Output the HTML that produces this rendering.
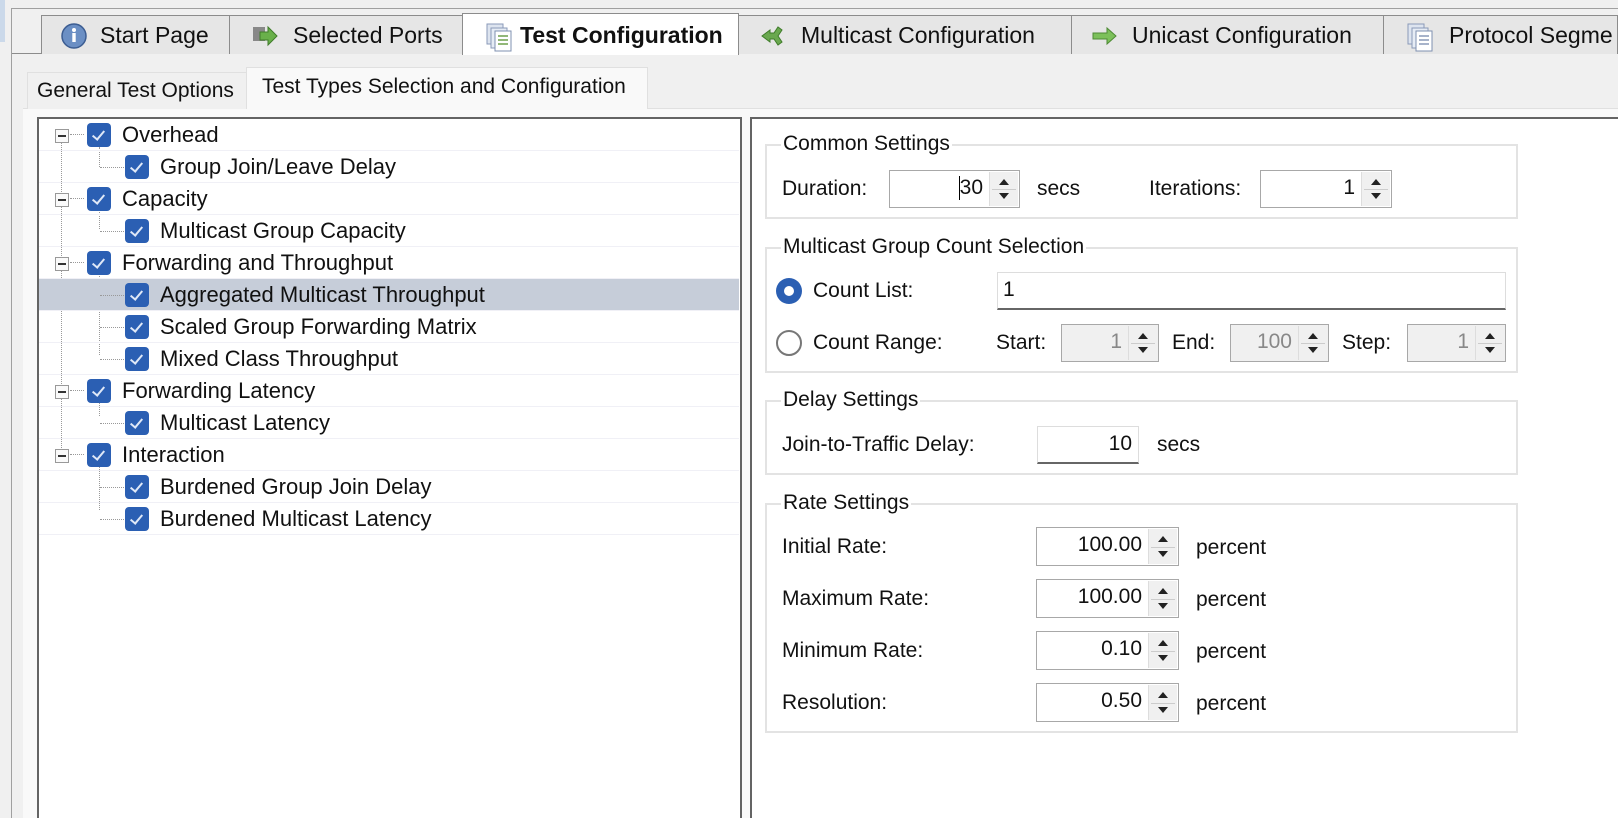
<!DOCTYPE html>
<html style="overflow:hidden;width:1618px;height:818px"><head><meta charset="utf-8"><style>
*{box-sizing:border-box;margin:0;padding:0}
body{width:1618px;height:818px;overflow:hidden;background:#f0f0f0;font-family:"Liberation Sans",sans-serif;color:#111;position:relative}
.a{position:absolute}
.tab{position:absolute;top:15px;height:39px;border:1px solid #8c8c8c;border-bottom:none;background:#e6e6e6;font-size:23px;line-height:36px;white-space:nowrap;overflow:hidden}
.tab svg{position:absolute;top:6px}
.tab span{position:absolute;top:1px}
.st{position:absolute;font-size:21px;line-height:36px;white-space:nowrap}
.row{position:absolute;left:39px;width:700px;height:32px;border-bottom:1px solid #f0f0f6;font-size:22px;line-height:31px}
.cb{position:absolute;width:24px;height:24px;border-radius:4px;background:#2b5fb3;top:4px}
.cb:after{content:"";position:absolute;left:8px;top:5px;width:5px;height:10px;border:solid #dfe8f7;border-width:0 2px 2px 0;transform:rotate(40deg)}
.row .t{position:absolute;top:0}
.exp{position:absolute;width:14px;height:14px;border:1px solid #999;background:#fafafa;top:10px}
.exp:after{content:"";position:absolute;left:2px;top:5px;width:8px;height:2px;background:#333}
.vl{position:absolute;border-left:1px dotted #999;width:0}
.hl{position:absolute;border-top:1px dotted #999;height:0}
.grp{position:absolute;border:2px solid #e3e3e3;left:765px;width:753px}
.gt{position:absolute;left:14px;top:-14px;background:#fff;padding:0 2px;font-size:21px;line-height:24px;white-space:nowrap}
.lbl{position:absolute;font-size:21px;line-height:24px;white-space:nowrap}
.inp{position:absolute;border:1px solid #a8a8a8;background:#fff;font-size:21px;line-height:34px;text-align:right}
.inp .v{position:absolute;right:36px;top:0}
.sp{position:absolute;right:1px;top:1px;bottom:1px;width:29px;background:#f0f0f0;border-left:1px solid #ddd}
.sp:before{content:"";position:absolute;left:9px;top:7px;border:5px solid transparent;border-bottom:6px solid #222;border-top:none}
.sp:after{content:"";position:absolute;left:9px;bottom:7px;border:5px solid transparent;border-top:6px solid #222;border-bottom:none}
.sp i{position:absolute;left:2px;right:2px;top:50%;border-top:1px solid #ccc}
.dis{background:#f0f0f0;color:#888}
</style></head><body>
<div class="a" style="left:0;top:0;width:5px;height:42px;background:#cbd9ea"></div>
<div class="a" style="left:11px;top:8px;width:1607px;height:810px;border-left:1px solid #a0a0a0;border-top:1px solid #a0a0a0"></div>
<div class="a" style="left:12px;top:53px;width:1606px;height:1px;background:#8c8c8c"></div>

<div class="tab" style="left:41px;width:189px"><svg style="left:18px" width="28" height="28" viewBox="0 0 28 28"><circle cx="14" cy="14" r="12" fill="#6b8fc4" stroke="#3c5d92" stroke-width="1.5"/><rect x="12.3" y="11" width="3.4" height="9" fill="#fff"/><circle cx="14" cy="8" r="2" fill="#fff"/></svg><span style="left:58px">Start Page</span></div>
<div class="tab" style="left:229px;width:234px"><svg style="left:20px" width="28" height="28" viewBox="0 0 28 28"><rect x="3" y="5" width="12" height="14" fill="#888"/><path d="M10 10h8V5l9 9-9 9v-5h-8z" fill="#69b04a" stroke="#3f7c2a"/></svg><span style="left:63px">Selected Ports</span></div>
<div class="tab" style="left:462px;width:277px;top:13px;height:42px;background:#fff;border-color:#8c8c8c"><svg style="left:22px;top:8px" width="28" height="30" viewBox="0 0 28 30"><rect x="2" y="2" width="16" height="20" fill="#dde4ef" stroke="#8a9ab8"/><rect x="6" y="6" width="16" height="20" fill="#e6ecf5" stroke="#8a9ab8"/><rect x="10" y="9" width="16" height="20" fill="#fff" stroke="#7f90b0"/><path d="M13 14h10M13 18h10M13 22h10" stroke="#6fa04c" stroke-width="1.5"/></svg><span style="left:57px;top:3px;font-weight:bold;font-size:23px">Test Configuration</span></div>
<div class="tab" style="left:738px;width:334px"><svg style="left:20px" width="28" height="28" viewBox="0 0 28 28"><path d="M3 14l8-6v3h4l4-6 4 3-4 6 4 6-4 3-4-6h-4v3z" fill="#6aa84f" stroke="#3f7c2a"/></svg><span style="left:62px">Multicast Configuration</span></div>
<div class="tab" style="left:1071px;width:313px"><svg style="left:18px" width="30" height="28" viewBox="0 0 30 28"><path d="M3 11h14V6l9 8-9 8v-5H3z" fill="#7cc05a" stroke="#4d8a34"/></svg><span style="left:60px">Unicast Configuration</span></div>
<div class="tab" style="left:1383px;width:235px"><svg style="left:22px" width="28" height="30" viewBox="0 0 28 30"><rect x="2" y="2" width="16" height="20" fill="#dde4ef" stroke="#8a9ab8"/><rect x="6" y="6" width="16" height="20" fill="#e6ecf5" stroke="#8a9ab8"/><rect x="10" y="9" width="16" height="20" fill="#fff" stroke="#7f90b0"/><path d="M13 14h10M13 18h10M13 22h10" stroke="#8a9ab8" stroke-width="1.5"/></svg><span style="left:65px">Protocol Segme</span></div>

<div class="a" style="left:23px;top:108px;width:1595px;height:710px;background:#f9f9f9;border-top:1px solid #e0e0e0"></div>
<div class="st" style="left:27px;top:72px;width:220px;height:37px;background:#f0f0f0;border:1px solid #e0e0e0;border-bottom:none;padding-left:9px">General Test Options</div>
<div class="st" style="left:246px;top:67px;width:402px;height:42px;background:#f9f9f9;border:1px solid #e0e0e0;border-bottom:none;padding-left:15px;line-height:38px">Test Types Selection and Configuration</div>

<div class="a" style="left:37px;top:117px;width:705px;height:701px;background:#fff;border:2px solid #646464;border-bottom:none"></div>
<div class="a" style="left:750px;top:117px;width:868px;height:701px;background:#fff;border:2px solid #646464;border-bottom:none;border-right:none"></div>

<div class="vl" style="left:61px;top:142px;height:316px"></div>
<div class="vl" style="left:99px;top:147px;height:20px"></div>
<div class="vl" style="left:99px;top:209px;height:20px"></div>
<div class="vl" style="left:99px;top:271px;height:84px"></div>
<div class="vl" style="left:99px;top:396px;height:20px"></div>
<div class="vl" style="left:99px;top:458px;height:52px"></div>

<div class="row" style="top:119px"><div class="exp" style="left:16px"></div><div class="hl" style="left:31px;top:15px;width:14px"></div><div class="cb" style="left:48px"></div><span class="t" style="left:83px">Overhead</span></div>
<div class="row" style="top:151px"><div class="hl" style="left:61px;top:16px;width:24px"></div><div class="cb" style="left:86px"></div><span class="t" style="left:121px">Group Join/Leave Delay</span></div>
<div class="row" style="top:183px"><div class="exp" style="left:16px"></div><div class="hl" style="left:31px;top:15px;width:14px"></div><div class="cb" style="left:48px"></div><span class="t" style="left:83px">Capacity</span></div>
<div class="row" style="top:215px"><div class="hl" style="left:61px;top:16px;width:24px"></div><div class="cb" style="left:86px"></div><span class="t" style="left:121px">Multicast Group Capacity</span></div>
<div class="row" style="top:247px"><div class="exp" style="left:16px"></div><div class="hl" style="left:31px;top:15px;width:14px"></div><div class="cb" style="left:48px"></div><span class="t" style="left:83px">Forwarding and Throughput</span></div>
<div class="row" style="top:279px;background:#c6cdd9"><div class="hl" style="left:61px;top:16px;width:24px"></div><div class="cb" style="left:86px"></div><span class="t" style="left:121px">Aggregated Multicast Throughput</span></div>
<div class="row" style="top:311px"><div class="hl" style="left:61px;top:16px;width:24px"></div><div class="cb" style="left:86px"></div><span class="t" style="left:121px">Scaled Group Forwarding Matrix</span></div>
<div class="row" style="top:343px"><div class="hl" style="left:61px;top:16px;width:24px"></div><div class="cb" style="left:86px"></div><span class="t" style="left:121px">Mixed Class Throughput</span></div>
<div class="row" style="top:375px"><div class="exp" style="left:16px"></div><div class="hl" style="left:31px;top:15px;width:14px"></div><div class="cb" style="left:48px"></div><span class="t" style="left:83px">Forwarding Latency</span></div>
<div class="row" style="top:407px"><div class="hl" style="left:61px;top:16px;width:24px"></div><div class="cb" style="left:86px"></div><span class="t" style="left:121px">Multicast Latency</span></div>
<div class="row" style="top:439px"><div class="exp" style="left:16px"></div><div class="hl" style="left:31px;top:15px;width:14px"></div><div class="cb" style="left:48px"></div><span class="t" style="left:83px">Interaction</span></div>
<div class="row" style="top:471px"><div class="hl" style="left:61px;top:16px;width:24px"></div><div class="cb" style="left:86px"></div><span class="t" style="left:121px">Burdened Group Join Delay</span></div>
<div class="row" style="top:503px"><div class="hl" style="left:61px;top:16px;width:24px"></div><div class="cb" style="left:86px"></div><span class="t" style="left:121px">Burdened Multicast Latency</span></div>

<div class="grp" style="top:144px;height:75px"><div class="gt">Common Settings</div></div>
<div class="lbl" style="left:782px;top:177px">Duration:</div>
<div class="inp" style="left:889px;top:170px;width:131px;height:38px"><span class="v">30</span><div class="sp"><i></i></div></div>
<div class="a" style="left:959px;top:176px;width:1px;height:24px;background:#000"></div>
<div class="lbl" style="left:1037px;top:177px">secs</div>
<div class="lbl" style="left:1149px;top:177px">Iterations:</div>
<div class="inp" style="left:1260px;top:170px;width:132px;height:38px"><span class="v">1</span><div class="sp"><i></i></div></div>

<div class="grp" style="top:247px;height:126px"><div class="gt">Multicast Group Count Selection</div></div>
<div class="a" style="left:776px;top:278px;width:26px;height:26px;border-radius:50%;background:#2b5fb3"></div>
<div class="a" style="left:784px;top:286px;width:10px;height:10px;border-radius:50%;background:#fff"></div>
<div class="lbl" style="left:813px;top:279px">Count List:</div>
<div class="inp" style="left:997px;top:272px;width:509px;height:38px;border-color:#ddd;border-bottom:2px solid #666;text-align:left;padding-left:5px">1</div>
<div class="a" style="left:776px;top:330px;width:26px;height:26px;border-radius:50%;border:2px solid #777;background:#fff"></div>
<div class="lbl" style="left:813px;top:331px">Count Range:</div>
<div class="lbl" style="left:996px;top:331px">Start:</div>
<div class="inp dis" style="left:1061px;top:324px;width:98px;height:38px"><span class="v">1</span><div class="sp"><i></i></div></div>
<div class="lbl" style="left:1172px;top:331px">End:</div>
<div class="inp dis" style="left:1230px;top:324px;width:99px;height:38px"><span class="v">100</span><div class="sp"><i></i></div></div>
<div class="lbl" style="left:1342px;top:331px">Step:</div>
<div class="inp dis" style="left:1407px;top:324px;width:99px;height:38px"><span class="v">1</span><div class="sp"><i></i></div></div>

<div class="grp" style="top:400px;height:75px"><div class="gt">Delay Settings</div></div>
<div class="lbl" style="left:782px;top:433px">Join-to-Traffic Delay:</div>
<div class="inp" style="left:1037px;top:426px;width:102px;height:38px;border-color:#ddd;border-bottom:2px solid #666;padding-right:6px">10</div>
<div class="lbl" style="left:1157px;top:433px">secs</div>

<div class="grp" style="top:503px;height:230px"><div class="gt">Rate Settings</div></div>
<div class="lbl" style="left:782px;top:535px">Initial Rate:</div>
<div class="inp" style="left:1036px;top:527px;width:143px;height:39px"><span class="v">100.00</span><div class="sp"><i></i></div></div>
<div class="lbl" style="left:1196px;top:536px">percent</div>
<div class="lbl" style="left:782px;top:587px">Maximum Rate:</div>
<div class="inp" style="left:1036px;top:579px;width:143px;height:39px"><span class="v">100.00</span><div class="sp"><i></i></div></div>
<div class="lbl" style="left:1196px;top:588px">percent</div>
<div class="lbl" style="left:782px;top:639px">Minimum Rate:</div>
<div class="inp" style="left:1036px;top:631px;width:143px;height:39px"><span class="v">0.10</span><div class="sp"><i></i></div></div>
<div class="lbl" style="left:1196px;top:640px">percent</div>
<div class="lbl" style="left:782px;top:691px">Resolution:</div>
<div class="inp" style="left:1036px;top:683px;width:143px;height:39px"><span class="v">0.50</span><div class="sp"><i></i></div></div>
<div class="lbl" style="left:1196px;top:692px">percent</div>
</body></html>
